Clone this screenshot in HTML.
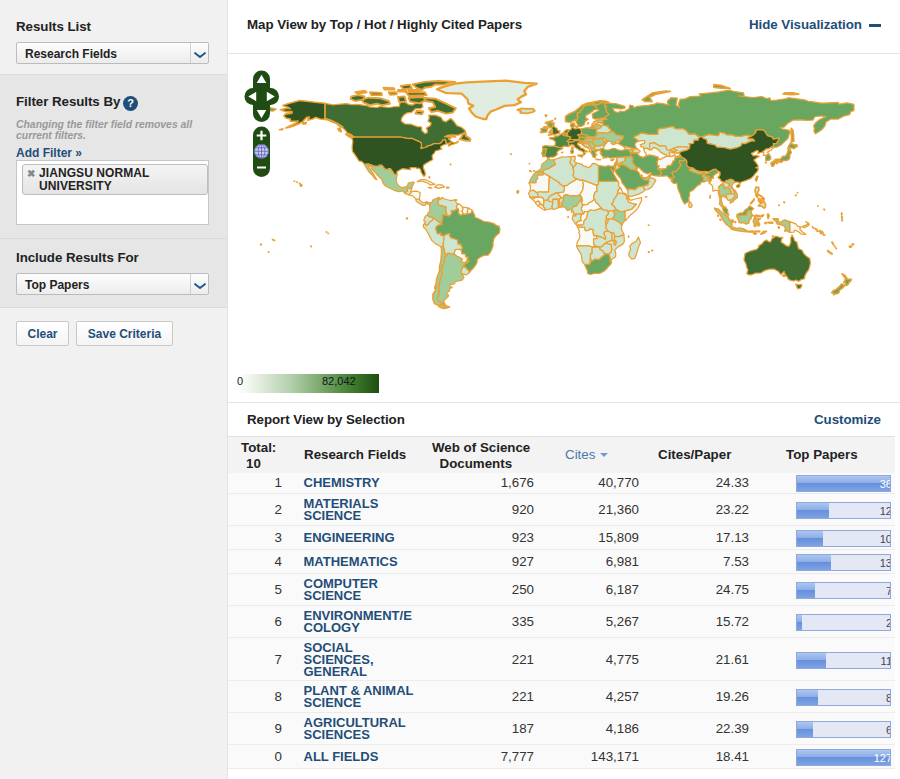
<!DOCTYPE html>
<html lang="en">
<head>
<meta charset="utf-8">
<title>Essential Science Indicators</title>
<style>
*{box-sizing:border-box;margin:0;padding:0}
html,body{width:900px;height:779px;overflow:hidden;background:#fff}
body{position:relative;font-family:"Liberation Sans",Arial,sans-serif;color:#222}
.abs{position:absolute}
#left{position:absolute;left:0;top:0;width:228px;height:779px;background:#f1f1f1;border-right:1px solid #e2e2e2}
#left .sec2{position:absolute;left:0;top:74px;width:227px;height:234px;background:#e6e6e6;border-top:1px solid #dedede;border-bottom:1px solid #dcdcdc}
#left .sep{position:absolute;left:0;top:238px;width:227px;height:1px;background:#d9d9d9}
.h{position:absolute;font-weight:bold;font-size:13.33px;color:#222;white-space:nowrap;letter-spacing:-0.05px}
.sel{position:absolute;left:16px;width:193px;height:22px;border:1px solid #bcbcbc;border-radius:2px;background:linear-gradient(#fdfdfd,#ececec);font-weight:bold;font-size:12px;color:#222;line-height:23.5px;padding-left:8px}
.sel .arr{position:absolute;right:0;top:0;width:18px;height:20px;border-left:1px solid #d0d0d0}
.sel .arr svg{position:absolute;left:2.5px;top:9px}
.btn{position:absolute;top:321px;height:25px;border:1px solid #c8c8c8;border-radius:2px;background:linear-gradient(#fff,#f4f4f4);font-weight:bold;font-size:12px;color:#1f4e79;text-align:center;line-height:25px}
#main{position:absolute;left:228px;top:0;width:672px;height:779px;background:#fff}
.line{position:absolute;left:0;width:672px;height:1px;background:#e4e4e4}
.th{position:absolute;font-weight:bold;font-size:13.33px;color:#222;line-height:15.5px;white-space:nowrap}
.row{position:absolute;left:0;width:667px;border-bottom:1px solid #ececec;background:#fafafa}
.num,.c1,.c2,.c3,.c4{position:absolute;font-size:13.33px;color:#333;white-space:nowrap;text-align:right}
.num{left:0;width:54px}
.c1{left:75.5px;text-align:left;font-weight:bold;color:#1f4e79;font-size:13px;line-height:12px;letter-spacing:0}
.c2{left:200px;width:106px}
.c3{left:320px;width:91px}
.c4{left:440px;width:81px}
.bar{position:absolute;left:568px;width:95px;height:17px;background:#e3e8f4;border:1px solid #8ea9da;overflow:hidden}
.bar i{position:absolute;left:0;top:0;height:15px;background:linear-gradient(#adc6ef 0%,#8eaee8 44%,#6690dc 48%,#7ea3e4 100%)}
.bar b{position:absolute;right:-2px;top:1px;font-weight:normal;font-size:11px;line-height:14px;color:#445}
.bar b.w{color:#fff}
</style>
</head>
<body>
<div id="left">
  <div class="sec2"></div>
  <div class="sep"></div>
  <div class="h" style="left:16px;top:18.5px">Results List</div>
  <div class="sel" style="top:42px">Research Fields<span class="arr"><svg width="12" height="7" viewBox="0 0 12 7"><path d="M1.2 1.2 L6 5 L10.8 1.2" fill="none" stroke="#235a90" stroke-width="2.1" stroke-linecap="round" stroke-linejoin="round"/></svg></span></div>
  <div class="h" style="left:16px;top:94px">Filter Results By</div>
  <div class="abs" style="left:123px;top:96px;width:15px;height:15px;border-radius:50%;background:#1f4e79;color:#fff;font-weight:bold;font-size:11px;line-height:15px;text-align:center">?</div>
  <div class="abs" style="left:16px;top:118.5px;width:200px;font-style:italic;font-weight:bold;font-size:10.4px;line-height:11.5px;color:#999">Changing the filter field removes all<br>current filters.</div>
  <div class="abs" style="left:16px;top:146px;font-weight:bold;font-size:12px;color:#1f4e79">Add Filter »</div>
  <div class="abs" style="left:16px;top:159.5px;width:193px;height:65.5px;background:#fff;border:1px solid #c6c6c6"></div>
  <div class="abs" style="left:22px;top:163.5px;width:186px;height:31.5px;background:linear-gradient(#f4f4f4,#e4e4e4);border:1px solid #bdbdbd;border-radius:3px"></div>
  <div class="abs" style="left:27px;top:167px;font-weight:bold;font-size:10px;color:#888;line-height:13px">✖</div>
  <div class="abs" style="left:39px;top:167px;font-weight:bold;font-size:12px;line-height:13px;color:#222;letter-spacing:0.08px">JIANGSU NORMAL<br>UNIVERSITY</div>
  <div class="h" style="left:16px;top:250px">Include Results For</div>
  <div class="sel" style="top:273px">Top Papers<span class="arr"><svg width="12" height="7" viewBox="0 0 12 7"><path d="M1.2 1.2 L6 5 L10.8 1.2" fill="none" stroke="#235a90" stroke-width="2.1" stroke-linecap="round" stroke-linejoin="round"/></svg></span></div>
  <div class="btn" style="left:16px;width:53px">Clear</div>
  <div class="btn" style="left:76px;width:97px">Save Criteria</div>
</div>
<div id="main">
  <div class="h" style="left:19px;top:17px">Map View by Top / Hot / Highly Cited Papers</div>
  <div class="h" style="left:521px;top:17px;color:#1f4e79">Hide Visualization</div>
  <div class="abs" style="left:641px;top:24px;width:12px;height:3px;background:#1f4e79"></div>
  <div class="line" style="top:53px"></div>
<svg class="abs" style="left:0;top:54px" width="672" height="320" viewBox="0 54 672 320">
<g stroke="#eba033" stroke-width="1.25" stroke-linejoin="round">
<path fill="#f7f9f4" d="M181.0,194.9 184.8,195.8 185.1,196.4 187.9,199.0 191.4,199.5 191.7,196.9 192.2,192.8 190.0,191.5 187.6,191.2 183.9,191.7 182.1,193.8Z"/>
<path fill="#f7f9f4" d="M189.2,181.5 193.3,179.5 197.5,179.7 202.4,182.0 207.0,184.3 201.6,184.8 200.8,183.5 195.8,181.6 192.5,181.0 190.9,181.5Z"/>
<path fill="#f7f9f4" d="M206.7,187.1 209.8,184.8 213.9,184.9 216.6,186.9 213.1,187.6 211.1,188.4Z"/>
<path fill="#f7f9f4" stroke-width="1.4" d="M200.3,187.4 203.6,187.9 202.4,188.2Z M218.6,187.2 221.0,187.4 220.5,188.0 218.6,187.9Z M200.8,177.2 201.6,176.4 201.3,178.0Z M227.5,199.7 228.8,199.9 227.9,200.8Z"/>
<path fill="#f7f9f4" d="M229.1,203.5 232.1,204.3 234.5,207.2 235.0,208.9 234.0,211.2 235.4,214.1 232.4,215.3 230.4,213.3 230.7,210.0 230.1,208.9 229.3,208.9 228.8,207.7 228.3,205.9 230.4,203.8Z"/>
<path fill="#f7f9f4" d="M234.5,207.2 238.7,207.7 240.3,208.1 239.5,210.0 239.5,213.8 237.0,214.3 235.4,214.1 234.0,211.2 235.0,208.9Z"/>
<path fill="#f7f9f4" d="M240.3,208.1 243.6,209.7 244.3,210.5 242.8,213.5 239.5,213.8 239.5,210.0Z"/>
<path fill="#f7f9f4" d="M226.0,253.8 226.6,251.0 227.5,249.5 232.1,249.1 233.4,250.4 233.9,253.6 237.3,254.0 237.8,256.8 239.8,256.9 239.3,259.4 239.2,260.9 237.3,262.3 236.2,262.5 232.7,262.0 234.4,259.2 231.2,257.3 228.8,256.3Z"/>
<path fill="#f7f9f4" d="M415.8,148.8 416.6,151.8 418.1,153.4 418.1,156.2 421.6,155.1 424.9,155.6 427.4,156.4 430.2,157.4 430.2,159.0 432.3,159.5 435.6,157.7 438.9,156.1 438.9,155.1 434.8,153.4 432.3,151.8 430.7,149.8 428.2,148.2 425.7,147.4 423.2,149.7 421.6,149.7 418.3,148.0Z"/>
<path fill="#f7f9f4" d="M441.0,156.4 442.0,154.8 441.0,153.1 443.5,150.5 445.5,151.5 443.8,152.6 447.6,152.8 450.9,152.6 452.9,156.1 450.4,156.2 447.1,157.2 447.1,155.2 445.0,155.7 443.5,156.6Z"/>
<path fill="#f7f9f4" d="M430.2,159.0 432.3,159.5 435.6,157.7 438.9,156.1 441.0,156.4 443.5,156.6 445.0,155.7 447.1,155.2 447.1,157.2 450.4,156.2 452.2,156.4 451.3,157.0 447.3,157.9 446.6,160.5 444.7,161.6 444.5,163.1 443.5,165.1 439.2,166.2 438.6,168.4 434.8,169.2 432.3,169.2 429.7,168.5 431.1,165.9 429.5,165.7 429.0,162.1Z"/>
<path fill="#f7f9f4" d="M481.4,183.5 481.9,181.5 483.2,180.3 483.1,178.0 485.4,178.0 485.2,176.1 486.2,174.8 489.2,173.0 489.7,171.2 492.0,172.1 492.0,175.1 490.1,177.5 492.3,179.4 493.1,181.0 495.9,182.0 494.3,184.1 492.5,185.1 490.5,187.1 491.6,189.8 491.1,192.8 492.8,196.7 493.4,198.4 492.0,201.0 491.6,197.7 490.3,192.8 490.1,190.3 487.5,190.3 485.0,191.2 484.7,187.1 483.7,184.8Z"/>
<path fill="#f7f9f4" d="M561.7,221.7 567.4,223.6 569.6,226.1 572.9,227.2 571.6,228.6 574.0,231.8 577.8,234.3 573.2,234.1 569.9,231.3 566.6,230.0 565.8,232.2 561.7,232.3Z M574.0,226.6 579.8,224.3 580.3,225.6 576.5,227.6Z M577.8,221.7 580.6,223.1 581.3,224.8 580.5,224.0Z M584.2,226.4 586.2,228.4 585.1,228.1Z"/>
<path fill="#f7f9f4" d="M534.3,152.0 538.4,148.8 540.6,148.7 543.4,146.9 544.5,147.4 544.7,148.0 543.0,150.3 539.4,152.1 540.9,154.1 538.1,155.4 535.3,155.4 535.8,152.6Z"/>
<path fill="#f7f9f4" d="M301.1,183.1 301.3,182.5 307.9,182.5 307.9,179.7 309.5,179.0 309.5,174.8 315.0,174.8 315.0,172.6 321.4,176.4 320.6,190.7 320.2,192.0 314.0,192.0 310.3,191.8 309.2,193.1 305.4,190.2 302.1,191.0 302.6,186.2Z"/>
<path fill="#f7f9f4" d="M301.8,197.1 306.7,196.9 306.7,198.2 304.6,199.5 302.9,198.2Z"/>
<path fill="#f7f9f4" d="M304.6,199.5 306.7,198.2 306.7,196.9 310.5,197.1 310.5,197.4 314.0,197.2 315.3,198.5 316.1,200.7 315.6,204.9 314.0,205.3 312.3,203.5 310.3,201.0 307.4,202.6 306.2,201.0Z"/>
<path fill="#f7f9f4" d="M307.4,202.6 310.3,201.0 312.3,203.5 310.3,206.1 307.9,203.8Z"/>
<path fill="#f7f9f4" d="M310.3,206.1 312.3,203.5 314.0,205.3 315.6,204.9 315.3,206.7 316.9,207.9 316.9,210.2 314.1,208.7Z"/>
<path fill="#f7f9f4" d="M331.3,207.4 330.5,206.7 330.1,203.5 330.1,201.0 329.1,199.2 330.9,199.4 331.8,202.6 332.1,207.2Z"/>
<path fill="#f7f9f4" d="M329.6,192.8 335.1,192.1 336.2,190.3 336.2,186.1 338.9,185.4 341.7,183.3 349.1,178.9 352.7,180.3 354.0,179.7 355.5,183.9 354.8,189.7 351.7,194.9 349.9,195.9 345.8,195.6 341.7,195.9 338.4,194.6 335.9,195.3 335.2,198.2 333.3,197.9 333.1,197.2 330.8,195.1Z"/>
<path fill="#f7f9f4" d="M354.0,179.7 368.9,185.4 368.9,191.7 367.0,192.0 365.6,196.6 366.4,199.4 363.9,201.5 360.6,203.1 360.0,204.3 356.5,204.8 354.8,205.1 352.7,201.0 354.5,201.0 353.4,196.4 351.7,194.9 354.8,189.7 355.5,183.9Z"/>
<path fill="#f7f9f4" d="M390.3,189.5 392.7,187.9 394.7,192.6 397.2,193.5 400.3,196.6 399.2,196.9 396.5,194.1 393.6,193.5 391.8,193.0 389.5,193.9 389.5,192.8Z"/>
<path fill="#f7f9f4" d="M400.3,196.6 399.2,196.9 398.2,198.5 399.8,199.5 400.7,198.5Z"/>
<path fill="#f7f9f4" d="M399.8,199.5 400.7,198.5 402.6,200.3 406.8,199.0 413.5,197.7 413.7,200.3 410.1,207.6 407.6,210.8 402.6,214.9 397.9,220.2 396.9,218.9 396.9,212.8 396.9,211.0 398.5,210.7 403.5,209.2 408.4,204.3 403.5,203.3 400.2,201.8Z"/>
<path fill="#f7f9f4" d="M354.8,205.1 356.5,204.8 360.0,204.3 360.6,203.1 363.9,201.5 366.4,199.4 367.0,199.5 368.0,202.6 369.7,203.5 372.1,206.7 374.5,209.0 371.3,208.9 366.4,210.5 362.3,210.0 360.0,211.7 356.7,211.7 355.7,213.8 353.2,209.2 353.7,206.9Z"/>
<path fill="#f7f9f4" d="M345.5,213.6 347.9,213.8 347.9,215.8 345.0,215.8Z"/>
<path fill="#f7f9f4" d="M347.4,223.8 348.6,223.1 349.9,221.2 353.2,220.7 352.4,218.2 353.2,215.1 351.1,213.8 355.7,213.8 356.7,211.7 360.0,211.7 358.6,218.2 356.0,221.0 355.7,224.0 353.2,225.4 350.7,224.9 349.1,225.6Z"/>
<path fill="#f7f9f4" d="M349.4,226.9 350.7,227.1 356.5,227.1 357.3,230.7 360.6,230.5 361.4,228.9 365.2,229.4 365.2,233.0 365.9,235.8 368.9,235.3 368.9,238.7 365.6,238.7 365.6,244.0 367.9,246.3 364.6,246.8 359.8,245.9 352.4,245.9 348.7,245.8 349.1,242.8 351.5,237.9 352.0,234.9 350.7,232.2 351.4,231.0Z"/>
<path fill="#f7f9f4" d="M374.1,265.9 376.6,264.5 377.8,265.8 375.8,267.6Z"/>
<path fill="#f7f9f4" stroke-width="1.5" d="M288.9,191.2 290.6,190.8 290.4,192.8 289.1,193.0Z M420.4,251.7 421.3,252.0 420.8,252.5Z M423.9,250.2 424.6,250.5 424.1,251.0Z M400.5,236.1 401.0,236.9 400.5,236.9Z M340.0,216.7 340.5,217.1 340.0,217.4Z M343.5,211.3 344.0,211.7 343.5,212.2Z M420.4,224.9 420.9,225.1 420.6,225.3Z"/>
<path fill="#f7f9f4" stroke-width="1.6" d="M599.6,250.5 604.4,253.8 603.7,254.1 599.9,251.5Z M621.5,246.1 623.6,246.4 622.6,247.4 621.5,246.9Z M624.0,244.1 625.8,244.0 624.8,245.0Z M603.9,242.0 604.8,242.5 604.2,243.1Z M604.8,243.6 605.8,244.5 605.2,244.6Z M606.5,246.1 607.2,246.6 606.5,246.6Z M608.1,248.1 608.5,248.6 608.0,248.6Z M587.2,228.4 588.9,229.4 588.0,229.5Z M588.9,230.5 590.0,231.3 589.2,231.3Z M592.2,232.7 594.3,233.3 593.0,233.6Z M594.1,231.2 595.1,232.8 594.5,232.3Z M595.1,234.3 596.8,234.9 595.8,235.1Z M591.3,230.5 592.7,231.2 591.8,231.2Z M567.6,195.3 568.1,195.1 567.8,195.8Z M555.9,202.1 556.6,202.1 556.2,202.8Z M595.9,209.2 596.6,209.2 596.3,209.9Z M613.4,213.1 614.1,213.5 613.7,214.8Z M613.7,216.4 614.4,217.1 613.9,218.4Z M614.1,219.4 614.6,220.0 614.1,221.0Z M551.0,204.9 551.3,205.1 551.0,205.4Z M589.8,205.9 590.2,206.1 590.0,206.2Z M569.4,192.5 569.6,192.6 569.4,192.8Z M44.5,239.5 45.5,239.7 45.0,240.0Z M46.0,240.2 46.7,240.4 46.2,240.5Z M82.8,246.1 83.4,246.3 83.3,246.8Z M98.3,231.8 98.6,232.0 98.3,232.2Z M100.1,233.3 100.4,233.5 100.1,233.6Z M40.4,252.0 40.9,252.2 40.6,252.3Z M32.8,244.0 33.3,244.6 32.7,245.0Z M222.3,164.3 222.8,164.3 222.5,164.6Z"/>
<path fill="#e2ede1" stroke-width="2.3" d="M209.0,89.2 217.2,92.8 220.5,93.1 233.7,93.6 239.5,99.3 240.3,103.4 245.3,105.9 241.1,108.3 243.6,112.4 247.7,116.5 255.1,119.0 258.4,119.0 259.3,115.7 262.6,111.6 267.5,109.7 276.6,105.9 286.5,105.1 293.0,102.3 289.7,99.3 293.0,96.9 298.0,94.4 296.3,91.1 299.6,87.0 308.7,83.7 296.3,82.9 278.2,80.6 260.1,81.3 238.7,82.4 227.1,83.7 220.5,85.4 212.3,87.8Z"/>
<path fill="#cee5cf" d="M177.4,193.6 181.0,194.9 182.1,193.8 183.9,191.7 182.8,191.3 183.8,188.7 183.8,187.1 182.3,188.2 179.3,188.2 179.3,191.2 177.7,192.0Z"/>
<path fill="#cee5cf" d="M187.9,199.0 188.1,201.0 191.5,203.5 192.7,204.1 195.0,205.4 197.0,205.4 198.3,202.8 200.4,204.6 201.9,204.4 201.7,203.1 198.3,201.7 195.5,203.0 193.3,201.8 191.4,199.5Z"/>
<path fill="#cee5cf" d="M211.8,198.0 211.1,199.9 213.9,198.5 213.9,197.4 216.4,199.0 220.5,200.0 223.0,200.7 226.3,199.9 227.3,201.0 229.1,203.5 230.4,203.8 228.3,205.9 228.8,207.7 229.3,208.9 226.3,210.8 223.3,210.7 223.8,213.3 221.4,216.1 218.9,215.4 218.6,213.6 217.6,210.0 218.1,207.2 213.9,205.9 210.6,205.1 210.0,202.6 209.8,200.2Z"/>
<path fill="#cee5cf" d="M199.4,215.1 201.6,216.7 203.2,216.9 205.2,217.6 204.9,219.9 201.6,222.3 199.9,224.8 198.3,225.6 197.0,224.6 197.0,223.0 197.8,221.5 195.8,221.0 196.1,219.0 197.5,216.1Z M178.5,217.9 179.7,217.9 179.3,219.0 178.5,218.9Z"/>
<path fill="#cee5cf" d="M197.0,223.0 197.0,224.6 198.3,225.6 199.9,224.8 201.6,222.3 204.9,219.9 205.2,217.6 207.3,219.0 209.8,221.3 212.8,223.6 214.1,224.3 209.3,225.6 207.7,228.1 209.0,232.7 210.1,233.8 213.0,233.0 213.0,235.4 214.8,235.4 216.1,237.9 215.6,242.0 214.8,243.6 215.6,244.5 214.8,246.1 213.3,247.4 211.5,245.8 207.3,243.6 203.7,240.4 202.1,237.1 199.4,232.2 197.8,229.2 195.5,227.2 195.3,224.8Z"/>
<path fill="#cee5cf" d="M214.8,235.4 216.1,237.9 215.6,242.0 214.8,243.6 215.6,244.5 214.8,246.1 215.9,248.6 216.4,251.0 217.4,254.8 218.9,254.8 220.0,253.2 223.0,253.8 226.0,253.8 226.6,251.0 227.5,249.5 232.1,249.1 233.4,250.4 234.0,248.6 234.5,246.9 233.1,245.8 233.1,244.1 230.1,244.0 229.6,240.0 227.1,239.0 223.0,237.6 221.7,236.3 221.7,233.5 219.7,233.6 216.4,235.4Z"/>
<path fill="#cee5cf" d="M234.4,266.9 237.0,266.8 241.1,271.0 241.3,272.7 238.8,274.6 236.7,274.6 233.1,273.2 233.4,270.7Z"/>
<path fill="#cee5cf" stroke-width="1.8" d="M317.3,115.2 318.6,115.2 318.1,116.4Z M289.3,109.8 293.0,108.5 299.6,108.8 305.2,108.7 306.9,110.8 304.6,112.1 298.8,113.4 292.2,112.8 293.0,111.1Z"/>
<path fill="#cee5cf" d="M355.7,143.3 360.6,143.8 361.3,144.7 361.4,146.1 359.8,147.5 358.1,146.9 355.3,144.9Z"/>
<path fill="#cee5cf" d="M359.8,147.9 359.8,147.5 361.4,146.1 362.8,147.2 363.2,148.7 363.9,150.5 362.6,152.3 361.3,151.3 361.4,148.8Z"/>
<path fill="#cee5cf" d="M363.2,148.7 364.7,148.2 366.2,148.0 367.2,149.7 363.9,150.5Z"/>
<path fill="#cee5cf" d="M366.7,144.4 367.0,145.6 371.2,145.9 373.8,145.1 376.4,145.7 375.4,148.5 372.8,149.0 372.1,149.7 369.7,149.5 367.2,149.7 366.2,148.0 367.0,146.6Z"/>
<path fill="#cee5cf" d="M364.1,125.4 363.9,123.9 365.1,122.9 366.5,122.8 368.0,123.9 369.3,123.6 369.3,122.4 371.3,122.3 374.5,123.1 375.8,125.2 373.1,126.1 370.3,124.9Z"/>
<path fill="#cee5cf" d="M368.0,129.0 371.7,128.3 373.0,127.0 373.1,126.1 375.8,125.2 380.2,126.2 380.4,127.7 383.2,129.8 381.7,132.0 379.7,133.3 374.6,132.9 368.2,132.9 368.7,131.0Z"/>
<path fill="#cee5cf" d="M373.1,138.2 375.1,138.0 377.4,138.8 378.7,141.1 376.9,141.5 375.8,142.8 375.6,140.6Z"/>
<path fill="#cee5cf" d="M395.2,146.2 397.7,149.3 401.0,150.0 403.5,149.7 405.9,150.0 405.8,148.7 401.8,147.5 398.5,146.6Z"/>
<path fill="#cee5cf" d="M401.0,150.0 401.3,151.6 403.1,152.3 405.1,153.6 405.9,152.6 404.3,150.5 403.5,149.7Z"/>
<path fill="#cee5cf" d="M403.5,149.7 404.3,150.5 405.9,152.6 405.1,153.6 405.9,153.6 408.4,152.5 409.9,154.4 410.1,153.4 412.2,151.3 409.4,148.8 405.8,148.7 405.9,150.0Z"/>
<path fill="#cee5cf" d="M410.4,141.3 413.3,140.6 416.6,140.6 416.6,143.1 413.3,144.4 412.2,144.7 413.3,146.9 415.8,147.2 415.8,148.8 418.3,148.0 421.6,149.7 421.6,143.6 425.7,142.6 429.8,144.7 431.5,146.1 436.3,145.7 438.2,146.9 438.1,148.5 438.9,149.8 441.4,150.2 443.0,149.5 445.5,148.4 446.3,148.0 450.4,146.9 452.4,146.6 454.2,147.0 459.5,147.2 461.5,148.2 461.6,146.9 461.8,144.1 461.0,143.8 465.3,143.3 466.1,140.0 470.2,140.2 470.5,138.0 472.7,136.7 469.7,136.1 466.9,133.8 461.1,134.1 457.7,130.0 454.5,128.5 450.4,128.8 446.3,128.5 446.3,126.7 443.0,126.7 437.2,127.9 430.7,128.8 429.8,130.5 429.8,134.1 427.4,134.4 420.8,134.4 419.1,133.8 413.3,132.8 409.2,135.4 406.8,136.2 405.9,137.9 408.4,139.2Z"/>
<path fill="#cee5cf" d="M421.6,149.7 421.6,143.6 425.7,142.6 429.8,144.7 431.5,146.1 436.3,145.7 438.2,146.9 438.1,148.5 438.9,149.8 441.4,150.2 443.0,149.5 445.5,148.4 447.1,149.7 449.6,150.5 446.3,151.5 443.5,150.5 441.0,153.1 442.0,154.8 441.0,156.4 438.9,156.1 438.9,155.1 434.8,153.4 432.3,151.8 430.7,149.8 428.2,148.2 425.7,147.4 423.2,149.7Z"/>
<path fill="#cee5cf" d="M445.5,148.4 446.3,148.0 450.4,146.9 452.4,146.6 454.2,147.0 459.5,147.2 461.5,148.2 458.7,150.2 454.5,151.1 450.9,152.6 447.6,152.8 443.8,152.6 445.5,151.5 446.3,151.5 449.6,150.5 447.1,149.7Z"/>
<path fill="#cee5cf" d="M389.0,158.5 389.8,157.0 391.9,157.0 395.2,157.0 399.2,156.6 397.4,157.5 396.9,161.0 393.2,162.6 389.9,164.4 388.1,163.8 388.5,162.8 389.6,161.3 388.6,160.7 388.3,160.0Z"/>
<path fill="#cee5cf" d="M387.0,169.0 387.8,165.7 388.1,163.8 389.9,164.4 393.2,162.6 393.9,164.6 390.3,165.7 391.9,167.4 388.8,169.5Z"/>
<path fill="#cee5cf" d="M405.9,169.7 408.2,168.2 409.1,170.7 407.6,170.3Z"/>
<path fill="#cee5cf" d="M399.8,190.5 400.5,188.9 402.6,188.9 406.8,189.7 410.1,186.9 415.0,186.2 416.8,190.0 415.3,191.8 410.1,194.4 404.3,196.1 401.0,196.6 400.5,195.6 399.8,192.8Z M417.3,196.7 419.1,196.9 418.0,197.2Z"/>
<path fill="#cee5cf" d="M415.0,186.2 419.9,184.6 421.1,181.3 420.3,180.2 421.3,177.7 422.2,176.6 423.2,178.2 425.9,178.7 427.9,180.5 425.7,183.9 424.4,186.2 422.4,187.9 419.9,189.5 416.8,190.0Z M421.8,174.6 422.4,174.3 422.2,175.4Z"/>
<path fill="#cee5cf" d="M413.0,176.7 413.7,174.6 414.3,175.9 414.0,177.2Z"/>
<path fill="#cee5cf" d="M475.8,172.6 476.8,171.3 480.3,171.8 480.9,173.3 477.3,173.6Z"/>
<path fill="#cee5cf" d="M460.8,204.3 461.5,201.3 463.1,203.3 464.3,205.6 463.3,207.2 461.5,207.6 460.8,205.9Z"/>
<path fill="#cee5cf" d="M494.3,184.1 495.9,182.0 497.1,182.6 497.7,180.7 499.0,183.0 501.5,183.9 500.7,185.6 502.8,186.7 505.1,189.7 506.6,192.6 506.5,193.3 504.0,193.8 502.7,193.9 503.3,191.7 501.8,190.3 501.8,188.7 499.5,187.2 497.4,187.9 495.9,188.7 496.2,185.4 494.9,185.4Z"/>
<path fill="#cee5cf" d="M498.9,198.2 498.1,195.3 499.2,193.9 502.7,193.9 504.0,193.8 506.5,193.3 506.5,197.2 504.0,199.2 501.5,200.3 500.0,200.2 499.2,199.2Z"/>
<path fill="#cee5cf" d="M517.2,210.0 519.1,209.2 519.0,210.3 518.0,210.7Z"/>
<path fill="#cee5cf" stroke-width="1.6" d="M528.0,187.1 530.7,187.2 530.9,190.3 529.7,192.0 529.7,194.1 533.7,196.1 533.7,196.9 531.2,195.3 528.0,194.8 527.6,193.1 526.9,190.8Z M530.4,205.9 532.8,203.3 536.0,201.3 537.6,204.3 537.3,207.1 536.0,208.2 533.7,206.2Z M534.1,196.9 536.3,198.5 535.6,200.7 534.6,199.7Z M530.4,198.0 532.3,200.2 532.0,202.5 531.0,201.7 530.4,200.2Z M522.4,203.6 526.2,198.9 525.9,200.5 523.1,203.6Z M527.9,195.4 529.5,195.8 529.0,197.2Z M532.5,199.0 533.7,199.0 533.0,201.8Z"/>
<path fill="#cee5cf" d="M474.0,136.7 476.0,136.2 480.9,134.3 490.0,135.7 490.8,134.6 491.6,132.1 497.4,133.3 498.2,134.7 504.8,134.9 507.3,136.2 512.2,136.5 518.0,135.1 521.6,135.7 523.4,136.2 520.5,137.4 519.8,138.8 524.6,138.8 526.7,140.8 522.8,141.1 517.2,143.6 513.7,143.4 513.1,145.7 508.9,147.7 502.3,149.2 495.7,147.5 489.2,147.2 486.7,144.9 479.3,143.3 478.6,139.5 475.3,138.4Z"/>
<path fill="#cee5cf" d="M325.7,159.8 326.5,162.5 327.3,164.4 323.2,166.9 320.2,168.7 315.0,170.3 315.0,172.6 321.4,176.4 331.3,182.8 331.3,183.5 334.6,185.9 338.9,185.4 341.7,183.3 349.1,178.9 345.8,177.2 345.0,174.3 345.8,173.1 345.5,169.8 345.0,167.9 344.1,164.9 343.0,164.1 341.7,162.0 343.0,160.0 343.5,156.9 340.8,156.7 337.5,157.0 334.2,156.9 329.3,158.5Z"/>
<path fill="#cee5cf" d="M343.5,156.9 343.0,160.0 341.7,162.0 343.0,164.1 344.1,164.9 345.0,167.9 346.1,166.6 348.3,164.1 348.3,163.0 345.9,161.1 347.3,159.5 346.6,157.5 347.4,156.7 345.5,156.2Z"/>
<path fill="#cee5cf" d="M348.3,163.0 348.3,164.1 346.1,166.6 345.0,167.9 345.5,169.8 345.8,173.1 345.0,174.3 345.8,177.2 349.1,178.9 352.7,180.3 354.0,179.7 368.9,185.4 368.9,184.6 370.5,184.6 370.5,181.3 370.5,165.6 367.2,163.6 364.7,163.4 362.3,166.6 360.6,167.7 358.1,166.6 354.8,165.6 354.3,164.3 350.7,163.4Z"/>
<path fill="#cee5cf" d="M321.4,176.4 331.3,182.8 331.3,183.5 334.6,185.9 336.2,186.1 336.2,190.3 335.1,192.1 329.6,192.8 328.5,192.6 326.0,194.1 324.4,194.9 322.2,195.8 320.6,198.0 320.2,200.3 319.1,200.0 316.1,200.7 315.3,198.5 314.0,197.2 310.5,197.4 310.5,197.1 309.2,193.1 310.3,191.8 314.0,192.0 320.2,192.0 320.6,190.7Z"/>
<path fill="#cee5cf" d="M302.1,191.0 305.4,190.2 309.2,193.1 310.5,197.1 306.7,196.9 301.8,197.1 301.6,195.8 300.5,193.3Z"/>
<path fill="#cee5cf" d="M316.1,200.7 319.1,200.0 320.2,200.3 321.6,201.5 324.9,201.8 324.7,204.3 324.0,206.7 324.7,209.0 322.7,208.9 319.4,209.5 316.9,210.2 316.9,207.9 315.3,206.7 315.6,204.9Z"/>
<path fill="#cee5cf" d="M320.2,200.3 320.6,198.0 322.2,195.8 324.4,194.9 326.0,194.1 328.5,192.6 329.6,192.8 330.8,195.1 333.1,197.2 333.3,197.9 330.9,199.4 329.1,199.2 324.7,199.4 324.9,201.8 321.6,201.5Z"/>
<path fill="#cee5cf" d="M324.7,209.0 324.0,206.7 324.7,204.3 324.9,201.8 324.7,199.4 329.1,199.2 330.1,201.0 330.1,203.5 330.5,206.7 331.3,207.4 329.3,208.2 326.0,209.5Z"/>
<path fill="#cee5cf" d="M332.1,207.2 331.8,202.6 330.9,199.4 333.3,197.9 335.2,198.2 335.6,200.2 333.9,202.6 333.7,206.9Z"/>
<path fill="#cee5cf" d="M370.5,181.3 390.1,181.3 390.8,183.0 390.6,186.2 392.7,187.9 390.3,189.5 389.5,192.8 389.0,195.3 387.0,198.0 385.8,200.0 385.3,201.8 383.7,204.3 386.2,206.4 388.5,209.9 385.3,210.5 380.4,211.3 378.7,210.3 375.4,210.2 374.5,209.0 372.1,206.7 369.7,203.5 368.0,202.6 367.0,199.5 366.4,199.4 365.6,196.6 367.0,192.0 368.9,191.7 368.9,184.6 370.5,184.6Z"/>
<path fill="#cee5cf" d="M389.5,193.9 391.8,193.0 393.6,193.5 396.5,194.1 399.2,196.9 398.2,198.5 399.8,199.5 400.2,201.8 403.5,203.3 408.4,204.3 403.5,209.2 398.5,210.7 396.9,211.0 394.4,211.8 391.9,211.5 389.5,210.2 388.5,209.9 386.2,206.4 383.7,204.3 385.3,201.8 385.8,200.0 387.0,198.0 389.0,195.3Z"/>
<path fill="#cee5cf" d="M380.4,211.3 385.3,210.5 387.0,214.9 385.3,217.1 385.3,219.0 379.6,219.2 378.1,219.7 378.2,216.1 380.4,213.8 380.1,211.7Z"/>
<path fill="#cee5cf" d="M379.6,219.2 385.3,219.0 391.3,222.3 393.9,225.1 393.2,228.1 394.4,231.3 395.9,234.6 391.1,236.6 386.8,236.3 385.8,233.1 383.5,232.8 380.4,231.5 377.9,228.1 377.9,224.8 380.1,221.3Z"/>
<path fill="#cee5cf" d="M378.1,219.7 379.6,219.2 380.1,221.3 377.9,224.8 377.4,221.8Z"/>
<path fill="#cee5cf" d="M343.5,209.5 345.8,206.1 347.9,206.4 349.1,204.6 351.1,201.7 353.4,198.5 352.7,197.1 353.4,196.4 354.5,201.0 352.7,201.0 354.8,205.1 353.7,206.9 353.2,209.2 355.7,213.8 351.1,213.8 347.9,213.8 345.5,213.6 345.3,211.2 344.0,210.0Z"/>
<path fill="#cee5cf" d="M345.0,215.8 347.9,215.8 347.9,213.8 351.1,213.8 353.2,215.1 352.4,218.2 353.2,220.7 349.9,221.2 348.6,223.1 347.4,223.8 344.1,219.0Z"/>
<path fill="#cee5cf" d="M349.4,226.9 349.1,225.6 350.7,224.9 353.2,225.4 355.7,224.0 356.0,221.0 358.6,218.2 360.0,211.7 362.3,210.0 366.4,210.5 371.3,208.9 374.5,209.0 375.4,210.2 378.7,210.3 380.1,211.7 380.4,213.8 378.2,216.1 378.1,219.7 377.4,221.8 377.9,224.8 377.9,228.1 380.4,231.5 376.9,231.3 376.1,232.7 376.6,235.4 377.9,237.7 377.1,239.4 374.6,237.6 371.3,236.6 369.3,235.9 368.9,235.3 365.9,235.8 365.2,233.0 365.2,229.4 361.4,228.9 360.6,230.5 357.3,230.7 356.5,227.1 350.7,227.1Z"/>
<path fill="#cee5cf" d="M365.6,238.7 368.9,238.7 368.9,235.3 369.3,235.9 371.3,236.6 374.6,237.6 377.1,239.4 377.9,237.7 376.6,235.4 376.1,232.7 376.9,231.3 380.4,231.5 383.5,232.8 384.2,237.1 383.7,240.4 379.1,242.0 376.9,243.5 373.8,246.8 371.0,246.6 367.9,246.3 365.6,244.0Z"/>
<path fill="#cee5cf" d="M383.5,232.8 385.8,233.1 386.8,236.3 386.3,239.5 388.5,241.8 387.5,245.4 385.8,243.6 386.2,241.2 383.7,240.4 384.2,237.1Z"/>
<path fill="#cee5cf" d="M395.9,234.6 391.1,236.6 386.8,236.3 386.3,239.5 388.5,241.8 387.5,245.4 385.8,243.6 386.2,241.2 383.7,240.4 379.1,242.0 379.4,243.6 383.5,244.8 383.4,246.9 383.7,249.9 382.7,252.3 380.9,254.1 382.0,257.6 382.0,261.4 383.5,261.5 383.0,259.9 387.6,256.8 387.8,253.5 386.7,250.2 389.9,246.9 394.9,244.1 396.4,241.2Z"/>
<path fill="#cee5cf" d="M371.0,246.6 373.8,246.8 376.9,243.5 379.4,243.6 383.5,244.8 383.4,246.9 383.7,249.9 382.7,252.3 380.9,254.1 377.8,253.8 375.4,252.8 374.9,251.0 372.1,249.4Z"/>
<path fill="#cee5cf" d="M362.3,253.5 362.3,258.1 363.6,261.4 366.7,259.2 371.3,259.5 373.6,257.3 377.8,253.8 375.4,252.8 374.9,251.0 372.1,249.4 371.0,246.6 367.9,246.9 363.9,247.4 363.9,253.5Z"/>
<path fill="#cee5cf" d="M348.7,245.8 352.4,245.9 359.8,245.9 364.6,246.8 367.9,246.3 371.0,246.6 367.9,246.9 363.9,247.4 363.9,253.5 362.3,253.5 362.3,258.1 362.3,264.0 358.1,264.6 356.5,264.3 354.3,261.7 353.2,254.3 349.1,247.7Z"/>
<path fill="#cee5cf" d="M380.4,260.0 382.0,260.0 382.0,262.0 380.4,262.0Z"/>
<path fill="#cee5cf" d="M410.5,237.1 412.5,242.8 410.9,246.1 408.1,255.1 406.8,258.4 403.8,259.2 401.0,255.9 401.0,252.7 402.6,249.9 401.8,246.1 404.0,243.6 408.1,241.2Z"/>
<path fill="#a1cd9a" d="M136.3,164.1 138.1,167.4 140.6,171.5 143.9,174.8 147.2,178.9 148.8,179.7 147.2,177.2 145.5,173.9 143.1,170.7 140.3,165.7 143.1,166.2 143.9,169.0 147.2,172.3 149.7,175.6 153.8,179.2 155.4,183.8 157.9,186.2 162.0,188.2 167.0,190.7 171.1,191.7 174.4,190.8 177.4,193.6 177.7,192.0 179.3,191.2 179.3,188.2 182.3,188.2 183.8,187.1 185.1,184.6 186.3,182.3 184.3,182.0 180.3,183.0 179.7,185.4 177.7,186.9 173.6,187.6 171.1,186.2 168.9,183.0 168.1,180.5 168.6,177.2 169.1,174.9 166.1,174.1 165.3,172.3 162.2,168.5 160.4,168.5 159.2,169.8 157.1,168.9 153.8,165.2 151.0,165.2 151.0,166.1 146.4,166.1 140.3,163.8Z"/>
<path fill="#a1cd9a" d="M201.7,203.1 204.1,202.1 204.9,200.0 207.0,199.0 210.6,197.4 211.8,198.0 209.8,200.2 210.0,202.6 210.6,205.1 213.9,205.9 218.1,207.2 217.6,210.0 218.6,213.6 218.9,215.4 214.3,214.6 214.8,218.2 213.9,220.7 214.1,224.3 212.8,223.6 209.8,221.3 207.3,219.0 205.2,217.6 203.2,216.9 201.6,216.7 199.4,215.1 199.9,213.3 201.9,210.8 201.6,206.7 201.9,204.4Z"/>
<path fill="#a1cd9a" stroke-width="1.5" d="M213.3,247.4 214.8,246.1 215.9,248.6 216.4,251.0 217.4,254.8 218.9,255.1 216.6,257.6 216.4,261.7 214.3,266.6 213.4,270.7 214.3,273.5 213.1,276.9 212.0,281.0 211.0,285.5 211.1,289.6 211.5,293.7 209.3,298.6 210.1,301.0 214.8,303.0 216.6,303.3 213.1,304.3 212.3,305.6 209.8,305.1 206.5,303.5 204.9,299.4 204.9,294.5 207.3,290.4 207.7,286.3 208.2,282.2 208.7,278.4 209.8,275.6 211.5,270.7 211.5,266.6 212.5,262.5 213.1,258.4 213.6,251.8Z M216.2,303.8 216.2,307.4 218.9,308.1 214.8,308.4 210.6,306.5 213.1,305.3 213.9,304.2Z M207.0,286.0 208.2,286.1 208.0,288.6 206.7,288.2Z"/>
<path fill="#a1cd9a" d="M220.0,253.2 223.0,253.8 226.0,253.8 228.8,256.3 231.2,257.3 234.4,259.2 232.7,262.0 236.2,262.5 237.3,262.3 239.2,260.9 239.3,259.4 240.8,260.4 240.6,262.0 237.3,263.8 234.4,266.9 233.4,270.7 233.1,273.2 235.0,275.6 235.9,277.3 234.4,279.9 231.2,281.0 227.1,281.4 226.6,284.0 222.2,284.6 222.2,287.1 224.3,287.1 221.7,288.7 221.4,291.2 218.1,292.8 220.5,295.3 220.5,296.1 217.6,299.1 215.6,300.7 216.6,303.3 214.8,303.0 210.1,301.0 209.3,298.6 211.5,293.7 211.1,289.6 211.0,285.5 212.0,281.0 213.1,276.9 214.3,273.5 213.4,270.7 214.3,266.6 216.4,261.7 216.6,257.6 218.9,255.1 218.9,254.8Z M216.2,303.8 216.2,307.4 219.7,307.6 221.9,307.1 218.1,305.6Z"/>
<path fill="#a1cd9a" d="M324.5,129.8 321.9,130.0 321.9,130.8 322.7,131.6 320.7,132.4 323.5,133.1 324.9,132.8 324.4,132.1 324.4,130.5Z"/>
<path fill="#a1cd9a" d="M319.1,128.7 320.2,128.2 319.4,126.9 317.3,126.7 317.1,127.2 316.0,128.0 316.9,128.7Z"/>
<path fill="#a1cd9a" d="M357.3,137.4 360.3,136.2 360.6,136.4 366.4,136.9 365.7,138.0 362.3,138.4 360.1,139.0 357.5,138.7Z"/>
<path fill="#a1cd9a" d="M356.3,140.3 357.5,138.7 360.1,139.0 362.3,138.4 365.7,138.0 366.9,138.8 364.2,141.6 362.8,141.8 360.3,142.1 356.7,141.1 355.7,140.8Z"/>
<path fill="#a1cd9a" d="M351.7,142.8 355.0,142.8 356.7,141.1 360.3,142.1 360.6,143.8 355.7,143.3 355.3,144.9 358.1,146.9 359.8,147.9 357.3,146.9 354.3,144.9 353.2,143.3 351.7,143.4Z"/>
<path fill="#a1cd9a" d="M360.3,142.1 362.8,141.8 364.7,143.3 366.7,144.4 367.0,146.6 366.2,148.0 364.7,148.2 363.2,148.7 362.8,147.2 361.4,146.1 361.3,144.7 360.6,143.8Z"/>
<path fill="#a1cd9a" d="M364.2,141.6 366.9,138.8 369.7,138.8 373.1,138.2 375.6,140.6 375.8,142.8 378.2,143.3 376.4,145.7 373.8,145.1 371.2,145.9 367.0,145.6 366.7,144.4 364.7,143.3 362.8,141.8Z"/>
<path fill="#a1cd9a" d="M382.5,160.0 386.3,158.9 385.3,160.2 383.7,160.7Z"/>
<path fill="#a1cd9a" d="M363.9,126.7 364.1,125.4 370.3,124.9 373.1,126.1 373.0,127.0 371.7,128.3 368.0,129.0 366.9,128.3 366.9,127.4Z"/>
<path fill="#a1cd9a" d="M369.3,122.4 368.0,121.1 368.0,120.3 371.3,119.7 375.4,119.8 374.5,121.0 374.9,122.4 374.5,123.1 371.3,122.3Z M365.6,121.5 367.2,121.3 366.4,122.1Z"/>
<path fill="#a1cd9a" d="M366.7,136.9 368.9,134.3 368.2,132.9 374.6,132.9 379.7,133.3 381.7,132.0 385.0,131.5 386.0,132.4 388.0,134.7 391.9,135.6 395.4,136.1 394.9,138.8 392.3,140.2 389.5,140.8 387.0,141.6 387.8,143.1 389.6,142.9 387.8,143.6 385.3,144.6 384.3,144.3 382.9,142.9 384.7,141.8 381.7,141.5 380.1,141.1 378.2,143.3 375.8,142.8 376.9,141.5 378.7,141.1 377.4,138.8 375.1,138.0 373.1,138.2 369.7,138.8 366.9,138.8 365.7,138.0 366.4,136.9Z"/>
<path fill="#a1cd9a" d="M387.1,163.1 388.6,160.7 389.6,161.3 388.5,162.8Z"/>
<path fill="#a1cd9a" d="M399.2,156.6 403.1,156.4 405.1,158.7 404.3,161.6 405.4,163.3 407.9,166.7 409.2,168.4 408.2,168.2 405.9,169.7 403.0,169.5 398.5,166.4 395.9,165.1 393.9,164.6 393.2,162.6 396.9,161.0 397.4,157.5Z"/>
<path fill="#a1cd9a" d="M414.3,177.7 416.0,179.8 420.3,180.2 421.3,177.7 422.2,176.6 421.9,174.8 419.1,177.5 416.6,177.7Z"/>
<path fill="#a1cd9a" d="M461.3,170.2 462.8,167.9 464.6,167.7 467.7,170.0 470.7,171.2 474.5,171.6 474.5,174.1 470.2,173.8 466.6,172.5 464.1,171.6Z"/>
<path fill="#a1cd9a" d="M476.0,182.0 476.1,181.2 475.5,179.4 475.6,177.5 474.5,177.2 474.5,175.1 475.0,174.1 477.3,174.8 477.3,175.9 481.6,176.4 480.3,177.5 479.6,178.5 481.4,178.5 481.9,181.5 481.4,183.5 480.6,180.8 478.6,181.0Z"/>
<path fill="#a1cd9a" d="M494.3,184.1 492.5,185.1 490.5,187.1 491.6,189.8 491.1,192.8 492.8,196.7 493.4,198.4 492.0,201.0 491.3,203.8 493.6,206.7 494.3,206.7 495.9,208.1 497.6,207.2 495.7,206.1 494.8,205.4 493.9,202.1 492.8,199.5 494.1,196.4 494.1,195.4 495.6,195.4 495.7,196.7 497.9,197.4 498.9,198.2 498.1,195.3 499.2,193.9 502.7,193.9 503.3,191.7 501.8,190.3 501.8,188.7 499.5,187.2 497.4,187.9 495.9,188.7 496.2,185.4 494.9,185.4Z"/>
<path fill="#a1cd9a" d="M497.7,180.7 499.9,180.2 502.8,179.2 505.1,180.0 507.3,182.1 505.1,183.5 503.7,186.2 505.0,188.7 507.8,191.2 509.3,194.6 509.3,197.7 506.0,200.3 505.1,201.8 502.3,203.3 502.2,200.8 501.5,200.3 504.0,199.2 506.5,197.2 506.5,193.3 506.6,192.6 505.1,189.7 502.8,186.7 500.7,185.6 501.5,183.9 499.0,183.0Z"/>
<path fill="#a1cd9a" stroke-width="1.5" d="M486.4,208.2 490.0,208.9 494.8,213.5 500.0,216.6 501.5,220.4 504.0,222.3 503.8,226.9 501.5,226.9 497.9,224.0 494.9,219.9 492.1,214.6 488.3,211.3Z M502.7,228.6 504.8,227.2 508.3,228.4 512.1,227.9 515.0,228.7 518.0,230.2 517.8,231.7 512.2,231.0 507.3,230.2 504.6,229.5Z M509.9,214.1 511.4,215.9 514.2,215.1 518.5,214.9 518.8,212.8 520.1,210.3 522.9,210.5 523.6,214.1 525.4,215.8 523.4,216.1 522.9,218.7 521.3,219.9 520.8,223.1 518.2,224.1 515.5,222.6 513.4,223.1 510.9,222.2 510.6,219.5 508.9,216.9 508.9,214.9Z M526.7,216.1 527.1,215.3 528.7,215.3 532.8,215.9 535.6,214.8 534.5,216.7 529.5,216.6 527.4,217.4 527.4,218.9 529.7,218.9 532.5,218.7 529.7,220.5 531.8,224.3 530.7,226.1 529.5,225.1 528.5,222.0 527.7,226.4 526.2,226.4 526.2,223.1 525.1,221.8 526.7,217.1Z M518.8,230.8 520.0,231.8 519.1,231.8Z M520.5,231.0 521.6,231.2 521.3,232.0 520.5,231.8Z M521.8,231.2 525.4,231.0 525.4,231.8 522.1,232.2Z M526.9,231.2 531.8,231.0 531.7,231.8 526.9,231.8Z M532.8,234.3 535.3,231.5 538.6,231.2 536.1,233.1Z M525.7,232.8 528.4,233.8 527.1,234.3 525.4,233.3Z M539.4,214.4 540.2,213.8 541.4,215.8 540.1,218.7 539.6,216.6Z M536.9,222.6 538.9,222.8 538.6,223.6 537.1,223.5Z M540.2,222.2 544.9,222.3 544.4,223.3 540.6,223.0Z M545.2,218.7 550.1,218.7 550.5,221.5 551.8,222.8 555.1,220.7 556.7,220.0 561.7,221.7 561.7,232.3 558.4,230.5 556.7,231.2 557.5,228.9 556.7,226.4 553.4,224.8 549.3,224.0 548.2,222.0 549.8,221.0 546.8,220.7Z M550.5,226.7 551.3,226.9 551.0,228.6 550.3,227.7Z M502.7,220.2 505.1,219.9 505.0,222.3 503.7,221.5Z M506.6,221.7 507.8,221.8 507.3,222.6Z M489.5,215.1 490.6,216.1 490.0,216.4Z M492.0,219.0 492.9,220.2 492.3,220.2Z"/>
<path fill="#a1cd9a" d="M325.7,159.8 326.5,162.5 327.3,164.4 323.2,166.9 320.2,168.7 315.0,170.3 315.0,172.0 307.5,172.0 309.5,171.2 312.8,169.0 313.3,167.1 314.0,164.1 316.9,162.1 319.1,160.0 319.6,158.7 320.6,158.5 321.9,159.7Z"/>
<path fill="#a1cd9a" d="M307.5,172.0 315.0,172.0 315.0,174.8 309.5,174.8 309.5,179.0 307.9,179.7 307.9,182.5 301.3,182.5 301.1,183.1 302.9,178.5 304.9,175.6Z"/>
<path fill="#a1cd9a" d="M333.7,206.9 333.9,202.6 335.6,200.2 335.2,198.2 335.9,195.3 338.4,194.6 341.7,195.9 345.8,195.6 349.9,195.9 351.7,194.9 352.7,197.1 353.4,198.5 351.1,201.7 349.1,204.6 347.9,206.4 345.8,206.1 343.5,209.5 340.8,210.2 339.2,210.3 337.5,207.9 336.6,207.1Z"/>
<path fill="#a1cd9a" d="M385.3,210.5 388.5,209.9 389.5,210.2 391.9,211.5 394.4,211.8 396.9,211.0 396.9,218.9 397.9,220.2 395.5,222.0 393.9,225.1 391.3,222.3 385.3,219.0 385.3,217.1 387.0,214.9Z"/>
<path fill="#69a761" d="M244.3,210.5 246.9,215.8 246.9,217.4 250.2,218.5 256.0,221.5 260.9,222.2 265.9,223.5 268.3,225.4 271.3,226.4 271.9,229.7 271.3,233.0 268.3,235.4 265.9,238.7 265.0,242.8 265.0,246.1 263.7,249.4 262.1,252.7 260.1,255.1 256.0,255.4 253.0,256.8 249.4,259.2 249.0,262.5 247.7,265.0 245.3,268.2 243.1,270.4 241.3,272.7 241.1,271.0 237.0,266.8 234.4,266.9 237.3,263.8 240.6,262.0 240.8,260.4 239.3,259.4 239.8,256.9 237.8,256.8 237.3,254.0 233.9,253.6 233.4,250.4 234.0,248.6 234.5,246.9 233.1,245.8 233.1,244.1 230.1,244.0 229.6,240.0 227.1,239.0 223.0,237.6 221.7,236.3 221.7,233.5 219.7,233.6 216.4,235.4 214.8,235.4 213.0,235.4 213.0,233.0 210.1,233.8 209.0,232.7 207.7,228.1 209.3,225.6 214.1,224.3 213.9,220.7 214.8,218.2 214.3,214.6 218.9,215.4 221.4,216.1 223.8,213.3 223.3,210.7 226.3,210.8 229.3,208.9 230.1,208.9 230.7,210.0 230.4,213.3 232.4,215.3 235.4,214.1 237.0,214.3 239.5,213.8 242.8,213.5Z"/>
<path fill="#69a761" stroke-width="1.6" d="M337.5,121.5 337.5,116.5 340.8,114.1 346.6,111.6 350.7,108.3 354.0,105.4 359.0,103.3 365.6,102.1 371.8,100.8 376.3,101.0 380.4,102.1 380.1,102.9 377.1,103.4 375.4,102.6 371.8,103.3 370.2,104.7 363.9,103.9 363.1,104.2 362.3,105.2 359.0,105.1 356.5,106.0 354.5,108.8 352.7,110.8 351.9,112.4 349.4,113.3 349.4,116.5 350.4,117.0 348.7,120.3 347.8,120.5 346.6,119.8 343.3,122.0 340.8,122.3Z"/>
<path fill="#69a761" d="M347.8,120.5 348.7,120.3 350.4,117.0 349.4,116.5 349.4,113.3 351.9,112.4 352.7,110.8 354.5,108.8 356.5,106.0 359.0,105.1 362.3,105.2 363.1,104.2 368.0,106.0 368.4,107.8 369.2,109.5 365.6,110.0 364.4,111.6 361.4,113.6 358.1,115.2 357.6,117.9 360.3,119.3 357.3,121.1 356.5,123.9 355.7,125.2 352.9,126.4 350.7,126.5 349.9,124.7 348.3,122.3Z M359.3,123.9 360.6,122.4 360.3,123.6Z"/>
<path fill="#69a761" d="M363.1,104.2 363.9,103.9 370.2,104.7 371.8,103.3 375.4,102.6 377.1,103.4 376.3,105.1 378.7,106.4 377.1,107.7 378.7,109.7 378.2,111.6 379.6,112.8 381.2,114.2 377.9,116.5 375.1,118.2 372.1,118.3 367.2,119.2 364.7,118.0 364.4,116.0 364.2,114.1 366.4,112.8 370.5,110.8 371.0,110.0 369.2,109.5 368.4,107.8 368.0,106.0Z"/>
<path fill="#69a761" d="M342.6,126.4 342.8,123.8 346.6,122.8 346.3,124.7 347.3,125.1 345.8,126.9 345.0,127.4 343.5,127.4Z M347.4,126.7 349.9,125.6 349.7,126.9 348.7,127.5Z"/>
<path fill="#69a761" stroke-width="1.5" d="M326.0,125.9 324.4,125.6 325.7,124.2 326.2,122.9 322.7,122.9 324.0,121.3 321.1,121.3 320.2,123.1 319.1,124.6 320.2,125.9 321.4,127.2 321.2,127.7 323.7,127.4 324.2,127.2Z M317.3,123.4 319.1,121.6 318.9,122.9Z M326.8,118.2 327.7,118.7 327.0,119.2Z M323.9,120.6 324.9,120.5 324.4,121.0Z"/>
<path fill="#69a761" d="M318.9,131.8 319.2,130.0 319.1,128.7 316.9,128.7 316.0,128.0 317.1,127.2 317.3,126.5 315.3,127.0 315.1,128.3 312.8,128.5 313.1,130.0 314.0,131.1 312.2,132.1 313.1,132.9 315.8,132.4Z"/>
<path fill="#69a761" d="M333.4,133.6 334.9,133.1 337.5,133.1 338.7,134.1 339.2,134.1 339.7,134.9 338.9,136.2 337.2,135.4 336.2,135.6 333.9,134.3Z"/>
<path fill="#69a761" d="M314.6,148.5 315.8,148.5 318.9,148.8 317.9,150.2 317.8,152.6 316.9,155.1 317.1,156.4 314.6,156.7 314.8,154.3 313.6,153.8 314.8,151.0Z M282.3,154.1 283.3,153.8 283.2,154.4Z M301.0,163.6 301.8,163.6 301.4,163.9Z"/>
<path fill="#69a761" d="M345.1,139.5 346.6,139.7 350.7,139.5 350.7,138.2 352.0,137.4 354.0,137.0 357.3,137.4 357.5,138.7 356.3,140.3 355.7,140.8 351.9,141.1 349.4,140.6 346.6,140.5Z"/>
<path fill="#69a761" d="M352.7,129.0 356.5,128.0 359.8,127.7 361.6,128.2 366.9,128.3 368.0,129.0 368.7,131.0 368.2,132.9 368.9,134.3 366.7,136.9 360.6,136.4 360.3,136.2 358.1,134.9 355.7,134.4 353.7,133.9 353.5,133.8 353.4,131.1Z"/>
<path fill="#69a761" d="M349.6,134.9 353.5,133.8 355.7,134.4 358.1,134.9 360.3,136.2 357.3,137.4 354.0,137.0 352.0,137.4Z"/>
<path fill="#69a761" d="M351.9,141.1 355.7,140.8 356.7,141.1 355.0,142.8 351.7,142.8 351.9,142.5Z"/>
<path fill="#69a761" d="M362.6,152.3 363.9,150.5 367.2,149.7 369.7,149.5 372.1,149.7 372.8,149.0 372.1,150.5 368.9,150.7 368.7,151.8 366.9,151.1 366.9,152.6 367.7,153.8 368.9,154.8 367.5,155.2 367.5,157.5 366.2,157.5 365.1,157.0 364.2,155.4 364.2,154.6 363.6,153.6Z M368.0,159.2 372.6,159.7 372.1,160.0 368.2,159.7Z M375.1,157.7 375.8,158.0 375.1,158.5Z M372.1,152.9 373.1,153.4 372.3,153.6Z"/>
<path fill="#69a761" d="M372.1,150.5 372.8,149.0 375.4,148.5 377.3,149.8 380.4,150.0 384.5,148.5 387.0,148.4 389.5,149.7 391.9,150.3 395.2,150.2 397.7,149.3 401.0,150.0 401.3,151.6 403.1,152.3 402.5,154.4 403.1,156.4 399.2,156.6 395.2,157.0 391.9,157.0 389.8,157.0 389.0,158.5 388.6,157.4 386.2,157.5 382.9,158.2 379.7,157.0 377.9,158.0 375.4,157.2 374.5,156.1 372.8,154.3 373.5,152.8 372.5,151.6Z"/>
<path fill="#69a761" d="M380.1,102.9 383.7,103.4 388.6,103.9 396.9,106.4 396.9,108.3 392.7,109.0 384.5,108.0 386.7,111.6 390.3,112.6 391.9,111.1 396.0,111.5 401.0,108.8 401.8,105.2 405.1,105.9 405.9,107.8 409.2,106.4 416.6,105.6 419.1,105.6 426.5,104.2 429.0,102.9 434.8,103.7 441.4,105.1 439.7,103.4 439.4,101.3 443.0,97.7 449.3,98.0 448.8,101.0 448.0,105.1 451.3,107.5 450.4,104.2 452.1,99.2 457.0,98.8 462.0,96.7 472.7,96.0 471.0,93.9 477.6,93.3 490.8,91.9 501.2,90.0 505.6,91.4 515.5,92.8 516.3,96.4 510.6,96.0 514.7,96.5 525.4,97.5 533.7,96.5 538.6,98.5 541.9,97.8 542.7,100.6 548.5,100.1 559.2,98.5 560.0,97.7 576.5,99.8 579.8,101.1 593.0,103.1 596.3,103.1 610.3,102.4 611.1,104.2 619.3,102.8 625.9,104.4 625.9,110.6 622.6,111.6 621.8,114.6 616.1,116.0 610.3,119.0 602.9,119.0 598.7,121.5 597.9,122.3 597.1,125.2 595.9,127.2 593.0,130.2 590.2,132.1 587.5,133.8 585.9,131.3 586.4,128.8 585.6,125.6 587.7,122.8 591.3,119.8 597.9,116.5 593.0,116.0 587.2,116.5 584.7,120.1 578.1,120.3 573.2,119.8 565.0,120.1 560.0,123.1 555.9,127.2 552.1,127.7 555.1,129.2 560.8,130.2 562.2,131.8 560.8,135.4 560.0,138.4 556.7,141.6 552.6,145.2 548.5,147.2 545.2,147.5 544.7,148.0 544.5,147.4 545.5,145.2 545.2,143.6 548.5,143.4 551.3,138.2 545.2,139.2 544.4,137.2 539.4,135.7 536.1,130.5 532.8,129.7 527.9,130.2 527.1,131.0 528.2,132.1 525.4,134.9 523.4,136.2 521.6,135.7 518.0,135.1 512.2,136.5 507.3,136.2 504.8,134.9 498.2,134.7 497.4,133.3 491.6,132.1 490.8,134.6 490.0,135.7 480.9,134.3 476.0,136.2 474.0,136.7 472.7,136.7 469.7,136.1 466.9,133.8 461.1,134.1 457.7,130.0 454.5,128.5 450.4,128.8 446.3,128.5 446.3,126.7 443.0,126.7 437.2,127.9 430.7,128.8 429.8,130.5 429.8,134.1 427.4,134.4 420.8,134.4 419.1,133.8 413.3,132.8 409.2,135.4 406.8,136.2 405.9,137.9 408.4,139.2 410.4,141.3 407.6,142.8 406.8,144.4 407.6,146.9 409.2,148.7 405.8,148.7 401.8,147.5 398.5,146.6 395.2,146.2 391.1,144.1 389.9,143.1 391.1,142.0 393.6,140.0 392.3,140.2 394.9,138.8 395.4,136.1 391.9,135.6 388.0,134.7 386.0,132.4 385.0,131.5 381.7,132.0 383.2,129.8 380.4,127.7 380.2,126.2 375.8,125.2 374.5,123.1 374.9,122.4 374.5,121.0 375.4,119.8 379.1,119.2 376.3,118.2 375.1,118.2 377.9,116.5 381.2,114.2 379.6,112.8 378.2,111.6 378.7,109.7 377.1,107.7 378.7,106.4 376.3,105.1 377.1,103.4Z M32.7,105.6 39.3,107.2 48.3,109.0 45.0,111.1 40.1,110.8 35.1,108.8 32.7,109.8Z M361.6,128.2 366.9,128.3 366.9,127.4 363.9,126.7 362.1,127.4Z"/>
<path fill="#69a761" stroke-width="1.7" d="M414.2,99.8 416.6,101.3 424.1,101.6 421.6,97.2 428.2,94.1 442.2,91.4 438.1,91.1 424.9,92.8 419.9,96.0Z M485.9,87.5 494.1,88.2 502.3,88.5 494.1,85.7 485.9,84.6Z M555.1,93.9 563.3,94.7 570.7,94.1 565.0,92.9 556.7,92.9Z M563.3,128.3 565.0,130.5 565.5,135.4 565.8,141.1 563.3,141.8 563.6,137.0 563.0,132.1Z"/>
<path fill="#69a761" d="M385.8,166.1 387.1,163.1 388.5,162.8 388.1,163.8 387.8,165.7 387.0,169.0Z"/>
<path fill="#69a761" d="M386.8,169.2 388.8,169.5 391.9,167.4 390.3,165.7 393.9,164.6 395.9,165.1 398.5,166.4 403.0,169.5 405.9,169.7 407.6,170.3 409.1,170.7 411.7,173.6 412.0,175.4 413.0,176.7 414.3,177.7 416.0,179.8 420.3,180.2 421.1,181.3 419.9,184.6 415.0,186.2 410.1,186.9 406.8,189.7 402.6,188.9 400.5,188.9 399.8,190.5 396.0,185.1 393.9,182.5 392.7,178.9 390.6,176.4 388.6,173.9 387.3,171.5Z"/>
<path fill="#69a761" d="M403.1,152.3 405.9,153.6 408.4,152.5 409.9,154.4 411.7,156.1 415.0,157.4 418.1,156.2 421.6,155.1 424.9,155.6 427.4,156.4 430.2,157.4 430.2,159.0 429.0,162.1 429.5,165.7 431.1,165.9 429.7,168.5 432.8,171.2 433.6,173.4 430.8,176.1 426.5,175.7 423.7,175.1 423.2,173.1 421.9,172.8 419.4,173.9 415.8,172.3 413.0,169.8 411.7,167.9 409.9,167.5 409.2,168.4 407.9,166.7 405.4,163.3 404.3,161.6 405.1,158.7 403.1,156.4 402.5,154.4Z"/>
<path fill="#69a761" d="M430.8,176.1 433.6,173.4 432.8,171.2 429.7,168.5 432.3,169.2 434.8,169.2 438.6,168.4 439.2,166.2 443.5,165.1 444.5,163.1 444.7,161.6 446.6,160.5 447.3,157.9 451.3,157.0 452.2,156.4 453.7,157.0 457.5,159.2 455.9,160.7 451.7,160.5 451.3,163.0 453.4,164.4 452.2,166.4 451.1,168.2 449.4,169.8 447.8,171.6 445.3,171.5 444.0,172.8 445.0,175.3 446.3,177.4 442.7,177.5 441.7,178.5 440.4,176.7 438.9,175.7 435.6,176.1Z"/>
<path fill="#69a761" d="M441.7,178.5 442.7,177.5 446.3,177.4 445.0,175.3 444.0,172.8 445.3,171.5 447.8,171.6 449.4,169.8 451.1,168.2 452.2,166.4 453.4,164.4 451.3,163.0 451.7,160.5 455.9,160.7 457.5,159.2 459.0,161.5 458.7,164.1 459.3,166.2 462.8,167.9 461.3,170.2 464.1,171.6 466.6,172.5 470.2,173.8 474.5,174.1 474.5,171.6 475.6,171.5 475.8,172.6 477.3,173.6 480.9,173.3 480.3,171.8 481.7,171.6 485.0,169.5 487.8,169.2 489.7,171.2 489.2,173.0 486.2,174.8 485.2,176.1 485.4,178.0 483.1,178.0 483.2,180.3 481.9,181.5 481.4,178.5 479.6,178.5 480.3,177.5 481.6,176.4 477.3,175.9 477.3,174.8 475.0,174.1 474.5,175.1 474.5,177.2 475.6,177.5 475.5,179.4 476.1,181.2 476.0,182.0 473.0,182.1 472.5,184.1 469.7,185.4 464.9,190.2 461.5,192.0 461.6,195.4 460.8,198.2 461.0,200.5 459.8,202.1 458.2,202.8 457.0,204.1 455.4,202.3 453.2,197.7 452.1,193.6 450.4,190.3 449.3,186.2 449.1,183.0 447.1,183.3 445.5,183.3 443.0,180.8 445.0,179.7Z M482.1,195.3 482.6,195.6 482.2,198.2 481.7,198.0Z"/>
<path fill="#69a761" d="M494.3,206.7 495.9,208.1 497.6,207.2 499.7,210.0 499.9,213.0 501.0,215.1 499.7,215.1 496.2,212.6 494.9,210.0 494.6,208.4Z M509.9,214.1 512.7,212.8 513.1,213.3 515.5,212.2 517.2,210.0 519.6,208.4 521.6,205.9 523.3,206.9 525.7,208.7 523.8,210.3 522.9,210.5 520.1,210.3 518.8,212.8 518.5,214.9 514.2,215.1 511.4,215.9Z"/>
<path fill="#69a761" d="M528.7,176.1 530.2,176.4 528.5,181.3 527.2,179.7Z"/>
<path fill="#69a761" stroke-width="1.6" d="M545.2,161.5 547.7,159.3 552.6,159.0 554.7,156.4 557.5,156.2 559.7,152.6 560.0,150.8 562.0,149.5 562.7,151.0 563.3,152.6 561.7,154.8 561.7,157.0 561.3,158.9 559.7,160.0 558.0,160.5 555.1,160.5 554.7,161.1 553.1,162.5 551.8,160.7 548.5,161.1Z M560.0,149.2 560.5,146.4 562.8,142.9 565.8,144.9 568.8,144.7 569.2,146.4 565.8,148.5 562.5,147.7 560.8,148.4Z M543.2,162.8 545.2,161.8 546.7,163.3 545.7,165.9 544.0,166.2 543.0,163.8Z M547.7,162.1 550.6,161.1 551.1,162.0 548.5,163.6Z"/>
<path fill="#69a761" d="M538.1,155.4 540.9,154.1 542.6,156.7 542.6,159.2 541.1,160.2 537.8,161.0 537.6,158.4 537.9,156.7Z M537.3,162.6 538.4,162.5 537.8,163.0Z"/>
<path fill="#69a761" d="M370.5,165.6 370.5,181.3 390.1,181.3 388.1,178.2 386.2,174.8 384.5,171.8 382.9,168.5 385.7,172.0 386.8,169.0 385.8,166.1 382.9,166.4 380.4,165.7 377.1,166.7 373.8,165.9Z"/>
<path fill="#69a761" d="M356.5,264.3 358.1,264.6 362.3,264.0 362.3,258.1 363.6,261.4 366.7,259.2 371.3,259.5 373.6,257.3 377.8,253.8 380.9,254.1 382.0,257.6 382.0,261.4 383.5,261.5 382.7,264.3 380.4,266.6 378.7,268.7 375.9,271.2 373.0,272.8 371.5,273.3 366.4,273.3 362.3,274.5 359.6,273.5 359.5,271.0 357.8,267.4Z"/>
<path fill="#69a761" stroke-width="1.6" d="M613.9,273.8 616.5,275.1 618.5,277.6 619.3,279.1 623.5,279.2 622.3,281.7 621.0,282.2 620.2,284.3 618.2,285.6 617.4,285.0 617.7,283.3 615.7,282.0 617.0,280.9 617.4,278.6 616.4,277.1Z M613.9,283.8 616.5,285.5 614.4,288.2 611.6,290.1 610.8,292.7 608.6,293.8 606.7,293.8 603.7,292.8 605.3,290.7 608.6,289.1 611.6,286.3Z M605.5,294.2 606.5,294.3 605.8,294.8Z"/>
<path fill="#4f8843" d="M333.4,133.6 333.9,134.3 336.2,135.6 337.2,135.4 338.9,136.2 339.8,136.2 342.8,137.0 341.8,139.3 339.2,141.5 340.8,142.1 340.5,144.4 341.8,145.6 340.0,146.7 336.7,146.2 334.4,146.6 334.6,147.9 330.5,147.4 326.3,146.2 327.3,144.3 327.3,141.6 325.2,139.8 321.6,138.7 321.9,137.5 326.7,137.5 326.3,135.9 329.6,136.2 331.9,134.9Z M343.5,147.0 345.0,146.9 345.0,149.3 343.8,149.3Z"/>
<path fill="#4f8843" d="M314.6,146.6 316.9,145.6 321.9,146.1 326.3,146.2 330.5,147.4 334.6,147.9 334.6,148.7 330.9,150.2 329.3,151.8 328.8,153.1 329.6,153.9 328.1,155.6 326.0,157.0 321.9,157.2 320.1,158.4 318.8,157.0 317.1,156.4 316.9,155.1 317.8,152.6 317.9,150.2 318.9,148.8 315.8,148.5 314.6,148.5Z M333.3,152.5 334.9,152.1 334.4,152.9Z M301.6,170.8 302.6,170.7 301.9,171.5Z M303.3,171.3 303.9,171.3 303.6,171.8Z M305.9,170.5 306.6,170.3 305.9,171.3Z"/>
<path fill="#3f6d32" d="M96.9,103.3 105.2,104.9 110.1,104.4 118.4,103.6 123.3,104.7 129.9,104.4 139.8,105.9 141.4,106.9 149.7,107.5 151.3,106.5 161.2,107.5 167.8,106.5 171.1,106.7 171.9,103.4 173.6,99.5 177.7,102.6 181.0,104.6 184.3,105.1 187.6,103.4 189.2,102.9 194.2,103.7 195.0,106.7 192.5,108.7 187.6,108.7 185.9,110.3 183.5,112.4 179.3,112.8 176.0,114.9 173.6,118.2 173.2,121.0 176.9,123.9 182.6,124.2 189.2,126.7 193.7,127.0 193.8,130.5 196.6,133.3 199.1,132.9 199.4,130.5 198.3,128.0 202.4,125.6 203.2,123.1 199.9,121.1 201.3,118.2 200.8,115.1 207.3,115.2 213.1,117.4 214.8,120.6 218.1,121.8 221.4,119.3 223.0,118.5 226.3,122.0 228.8,125.6 233.7,127.5 237.0,130.5 237.5,132.1 235.4,133.1 230.4,135.1 223.8,134.9 219.2,135.4 216.4,137.0 222.2,136.7 223.3,137.9 220.5,138.7 222.2,140.3 223.8,142.0 227.9,142.8 230.4,141.1 229.6,142.6 224.7,144.3 220.5,146.1 220.2,144.6 223.0,142.9 218.9,143.4 217.6,142.3 217.6,140.2 215.3,139.7 213.1,142.8 211.5,143.6 206.0,143.6 203.2,145.1 199.1,146.2 199.1,147.0 193.3,148.5 192.5,148.0 193.5,146.9 193.3,143.1 191.5,141.8 190.0,141.1 183.6,138.2 181.6,138.7 177.7,138.2 172.4,137.0 126.3,137.0 123.6,134.9 119.2,132.9 117.5,130.5 114.7,127.7 114.7,126.9 110.1,123.9 103.5,120.6 96.9,118.5Z"/>
<path fill="#3f6d32" stroke-width="1.9" d="M126.1,138.0 122.5,137.4 117.9,134.3 120.0,134.1 123.3,135.4 125.8,137.4Z M110.1,128.8 112.3,128.8 113.1,131.5 111.3,130.8Z M231.6,139.2 237.0,140.5 242.0,141.0 242.5,139.3 241.1,137.9 237.8,135.9 237.8,132.9 234.9,134.3 232.9,137.9Z M223.0,135.6 227.5,136.7 225.5,136.9Z M123.3,96.4 130.1,95.1 136.6,96.4 135.3,99.6 127.3,101.0 122.6,99.0Z M134.0,99.6 140.6,97.7 152.6,98.3 160.7,101.0 162.0,103.7 154.0,105.1 148.7,103.7 141.9,105.1 135.3,102.3Z M127.3,92.1 136.6,90.8 138.6,92.3 130.1,93.7Z M141.9,92.3 153.3,92.9 154.0,95.1 143.4,95.1Z M155.3,87.7 166.0,88.3 166.6,89.6 156.6,89.5Z M160.7,92.3 168.6,92.3 168.6,94.4 162.0,94.7Z M184.6,84.4 196.6,81.9 210.0,81.0 227.3,81.9 215.3,84.6 207.3,84.4 203.4,86.7 196.6,87.7 194.0,90.0 188.7,88.0Z M172.7,85.9 182.0,84.6 183.9,88.3 175.4,89.2Z M178.0,92.3 196.6,92.1 198.6,95.1 180.7,95.7Z M169.9,90.0 178.0,89.5 178.7,91.6 170.6,91.6Z M180.7,89.6 191.4,90.0 191.4,91.4 181.3,91.4Z M169.9,97.0 176.7,96.4 178.0,101.6 171.3,102.3Z M180.7,97.7 195.3,97.0 197.3,100.3 191.4,103.3 182.0,101.6Z M197.3,98.0 207.3,98.7 218.1,103.7 227.9,108.3 224.7,112.6 218.1,113.6 210.0,110.8 203.4,112.1 200.6,108.3 207.3,107.0 204.7,102.3 197.3,101.0Z M188.7,110.8 195.3,111.5 194.0,114.4 187.4,113.6Z"/>
<path fill="#3f6d32" d="M319.9,135.2 323.5,134.9 326.8,134.3 331.4,133.4 330.9,132.4 332.1,131.0 329.8,130.5 329.3,129.5 329.0,128.3 326.8,127.2 326.0,125.9 324.2,127.2 323.7,127.4 323.9,128.8 324.5,129.8 324.4,130.5 324.4,132.1 324.9,132.8 324.0,133.4 321.9,133.8Z"/>
<path fill="#3f6d32" d="M334.9,133.1 336.2,131.8 337.2,130.5 339.2,129.7 341.2,130.0 340.8,131.6 339.2,132.4 339.2,134.1 338.7,134.1 337.5,133.1Z"/>
<path fill="#3f6d32" d="M339.2,141.5 341.8,139.3 345.1,139.5 346.6,140.5 346.1,141.5 344.1,142.1 340.8,142.1Z"/>
<path fill="#3f6d32" d="M340.8,142.1 344.1,142.1 346.1,141.5 346.6,140.5 349.4,140.6 351.9,141.1 351.9,142.5 349.6,143.1 349.7,144.9 351.7,146.1 352.7,147.9 355.7,148.7 355.7,149.5 359.8,151.5 359.6,152.1 357.3,151.0 356.5,152.3 357.5,153.4 356.5,154.6 355.2,155.2 355.5,153.8 355.0,151.8 353.2,150.8 350.7,149.8 348.6,148.2 346.6,147.0 346.1,145.4 343.8,144.6 341.8,145.6 340.5,144.4Z M349.7,155.1 355.0,154.8 354.2,157.2 350.1,155.7Z M342.8,150.2 345.3,150.0 345.1,153.1 343.1,153.4Z"/>
<path fill="#3f6d32" d="M517.2,253.2 516.3,257.6 516.0,260.0 518.0,264.1 518.8,267.4 520.0,269.9 518.8,273.5 520.5,274.8 523.8,274.8 527.1,273.2 532.8,273.0 536.9,270.4 541.9,269.2 546.0,269.1 550.1,271.2 552.9,274.6 556.1,271.5 556.6,274.0 554.9,275.3 557.5,274.0 556.9,275.9 559.2,276.4 560.0,278.9 562.5,280.4 565.8,281.0 568.3,280.0 570.6,281.5 573.2,279.6 576.5,278.6 576.8,275.9 578.6,272.5 580.6,269.9 581.4,267.4 582.4,263.6 581.8,258.4 578.1,255.9 575.7,253.5 574.0,250.2 570.4,248.6 569.6,245.0 568.8,242.0 566.6,240.7 565.8,238.4 564.1,234.9 562.7,237.9 562.8,242.0 561.3,246.1 559.2,246.1 556.7,244.6 553.1,242.0 553.4,239.5 554.7,237.4 551.8,237.4 547.8,236.1 546.0,237.4 543.9,238.7 542.7,241.8 540.6,241.7 538.6,240.0 536.1,241.2 533.7,244.1 530.9,245.6 530.7,247.2 528.7,249.4 525.4,250.2 521.8,251.2Z M567.8,284.1 570.7,284.8 573.7,284.5 573.5,286.6 572.4,288.2 569.9,288.9 568.6,286.6Z M554.4,275.9 556.6,275.9 555.9,276.4Z M544.0,236.1 545.8,236.1 544.9,236.8Z"/>
<path fill="#36602a" d="M341.2,130.0 343.3,129.5 343.5,127.4 345.0,127.4 345.8,128.2 347.4,128.8 349.9,128.2 352.7,129.0 353.4,131.1 353.5,133.8 349.6,134.9 352.0,137.4 350.7,138.2 350.7,139.5 346.6,139.7 345.1,139.5 341.8,139.3 342.8,137.0 339.8,136.2 339.7,134.9 339.2,134.1 339.2,132.4 340.8,131.6Z"/>
<path fill="#2f5422" stroke-width="1.6" d="M96.9,103.3 96.9,118.5 103.5,120.6 110.1,123.9 114.7,126.9 112.6,127.2 108.5,123.6 104.3,122.0 99.4,119.7 92.0,119.0 87.9,117.4 84.6,119.0 79.6,120.3 81.3,117.0 78.8,117.4 76.3,119.8 74.7,121.8 69.7,124.2 65.6,126.1 60.7,127.5 57.7,128.0 62.3,125.7 68.1,123.1 70.2,121.1 67.3,121.3 62.3,121.1 62.3,119.0 58.2,118.2 55.7,116.0 57.4,114.1 64.0,113.1 64.0,111.6 57.4,111.6 52.4,109.8 59.0,108.2 62.3,108.8 59.9,107.2 54.9,105.4 60.7,103.4 68.9,101.3 71.4,100.5 78.8,101.3 87.0,102.3Z M51.6,129.8 54.9,128.8 54.4,129.7Z M74.7,123.1 78.3,122.3 78.0,123.6 75.5,124.2Z"/>
<path fill="#2f5422" d="M126.3,137.0 123.8,138.0 124.9,141.5 124.1,146.9 124.5,151.3 127.4,155.4 129.9,159.2 130.7,160.8 134.0,161.6 136.3,164.1 140.3,163.8 146.4,166.1 151.0,166.1 151.0,165.2 153.8,165.2 157.1,168.9 159.2,169.8 160.4,168.5 162.2,168.5 165.3,172.3 166.1,174.1 169.1,174.9 168.9,171.8 172.7,169.5 174.7,168.7 178.5,169.2 181.0,169.5 182.6,169.5 181.8,167.9 184.3,167.7 187.6,167.5 189.2,168.7 190.9,168.2 192.8,169.8 193.0,172.0 194.5,174.3 195.5,176.1 197.0,175.9 197.3,173.4 196.5,170.7 195.2,167.4 195.8,164.9 198.3,163.3 200.8,161.8 203.2,160.5 204.9,159.5 204.1,156.7 204.4,155.1 206.5,152.9 207.3,151.0 210.6,150.2 213.9,149.0 212.6,147.7 213.1,146.1 216.4,144.6 218.9,143.8 217.6,142.3 217.6,140.2 215.3,139.7 213.1,142.8 211.5,143.6 206.0,143.6 203.2,145.1 199.1,146.2 199.1,147.0 193.3,148.5 192.5,148.0 193.5,146.9 193.3,143.1 191.5,141.8 190.0,141.1 183.6,138.2 181.6,138.7 177.7,138.2 172.4,137.0Z M72.0,184.9 73.0,184.3 74.2,185.4 72.7,186.4Z M71.1,183.1 72.2,183.3 71.6,183.6Z M68.4,182.1 69.4,182.0 69.2,182.5Z M65.9,181.2 66.8,181.0 66.6,181.5Z"/>
<path fill="#2f5422" d="M450.9,152.6 454.5,151.1 458.7,150.2 461.5,148.2 461.6,146.9 461.8,144.1 461.0,143.8 465.3,143.3 466.1,140.0 470.2,140.2 470.5,138.0 472.7,136.7 474.0,136.7 475.3,138.4 478.6,139.5 479.3,143.3 486.7,144.9 489.2,147.2 495.7,147.5 502.3,149.2 508.9,147.7 513.1,145.7 513.7,143.4 517.2,143.6 522.8,141.1 526.7,140.8 524.6,138.8 519.8,138.8 520.5,137.4 523.4,136.2 525.4,134.9 528.2,132.1 527.1,131.0 527.9,130.2 532.8,129.7 536.1,130.5 539.4,135.7 544.4,137.2 545.2,139.2 551.3,138.2 548.5,143.4 545.2,143.6 545.5,145.2 544.5,147.4 543.4,146.9 540.6,148.7 538.4,148.8 534.3,152.0 529.7,153.6 530.4,151.0 528.7,150.5 526.2,152.1 523.4,153.4 525.2,155.9 528.4,155.4 531.2,156.4 527.9,158.4 525.9,160.0 527.6,162.0 530.0,165.4 530.2,166.9 527.9,167.7 530.4,168.5 529.5,171.2 527.1,173.8 525.4,176.1 522.6,178.7 517.7,180.7 516.3,181.0 513.4,182.0 511.1,184.1 511.2,182.6 510.1,182.1 507.3,182.1 505.1,180.0 502.8,179.2 499.9,180.2 497.7,180.7 497.1,182.6 495.9,182.0 493.1,181.0 492.3,179.4 490.1,177.5 492.0,175.1 492.0,172.1 489.7,171.2 487.8,169.2 485.0,169.5 481.7,171.6 480.3,171.8 476.8,171.3 475.8,172.6 475.6,171.5 474.5,171.6 470.7,171.2 467.7,170.0 464.6,167.7 462.8,167.9 459.3,166.2 458.7,164.1 459.0,161.5 457.5,159.2 453.7,157.0 452.2,156.4 452.9,156.1Z M508.4,185.9 510.1,184.4 512.2,185.1 511.1,187.2 508.9,187.2Z"/>
</g>
<g transform="translate(-228,0)">
<rect x="253" y="70.5" width="17" height="51.5" rx="8.5" fill="#204c14"/>
<rect x="244.5" y="88" width="34.5" height="17" rx="8.5" fill="#204c14"/>
<path d="M261.5,74.8 L266.3,83 L256.7,83Z M261.5,118.2 L266.3,110 L256.7,110Z M248.2,96.5 L256.2,91.8 L256.2,101.2Z M274.8,96.5 L266.8,91.8 L266.8,101.2Z" fill="#fff"/>
<rect x="253" y="126.5" width="17" height="50.5" rx="8.5" fill="#204c14"/>
<path d="M256.7,135.5 H266.3 M261.5,130.7 V140.3 M257,167.5 H266" stroke="#fff" stroke-width="2.2" fill="none"/>
<circle cx="261.5" cy="151.3" r="7.2" fill="#c9ccec"/>
<g fill="none" stroke="#5257b8" stroke-width="0.7">
<circle cx="261.5" cy="151.3" r="7"/>
<ellipse cx="261.5" cy="151.3" rx="3.4" ry="7"/>
<path d="M261.5,144.3 V158.3 M254.5,151.3 H268.5 M255.5,147.8 H267.5 M255.5,154.8 H267.5"/>
</g>
</g>

</svg>
  <div class="abs" style="left:9px;top:374px;width:142px;height:19px;background:linear-gradient(90deg,#ffffff 0%,#f3f7f0 8%,#b3cfab 38%,#7dab70 58%,#3c7c2c 82%,#1e4d10 100%)"></div>
  <div class="abs" style="left:9px;top:375px;font-size:11px;color:#222">0</div>
  <div class="abs" style="left:94px;top:375px;font-size:11px;color:#112">82,042</div>
  <div class="line" style="top:402px"></div>
  <div class="h" style="left:19px;top:411.5px">Report View by Selection</div>
  <div class="h" style="left:586px;top:411.5px;color:#1f4e79">Customize</div>
  <div class="abs" style="left:0;top:436px;width:667px;height:38px;background:#f3f3f3;border-top:1px solid #e0e0e0"></div>
  <div class="th" style="left:13px;top:440px">Total:<br><span style="padding-left:5px">10</span></div>
  <div class="th" style="left:76px;top:447px">Research Fields</div>
  <div class="th" style="left:204px;top:440px">Web of Science<br><span style="padding-left:7.5px">Documents</span></div>
  <div class="th" style="left:337px;top:447px;color:#4a79a8;font-weight:normal">Cites</div>
  <div class="abs" style="left:372px;top:453px;width:0;height:0;border-left:4px solid transparent;border-right:4px solid transparent;border-top:4px solid #6f9bd0"></div>
  <div class="th" style="left:430px;top:447px">Cites/Paper</div>
  <div class="th" style="left:558px;top:447px">Top Papers</div>
<div class="row" style="top:473px;height:21px"></div>
<div class="num" style="top:475px">1</div>
<div class="c1" style="top:477.0px">CHEMISTRY</div>
<div class="c2" style="top:475px">1,676</div>
<div class="c3" style="top:475px">40,770</div>
<div class="c4" style="top:475px">24.33</div>
<div class="bar" style="top:475px"><i style="width:93px"></i><b class="w">36</b></div>
<div class="row" style="top:494px;height:32px"></div>
<div class="num" style="top:502.0px">2</div>
<div class="c1" style="top:498.0px">MATERIALS<br>SCIENCE</div>
<div class="c2" style="top:502.0px">920</div>
<div class="c3" style="top:502.0px">21,360</div>
<div class="c4" style="top:502.0px">23.22</div>
<div class="bar" style="top:502.0px"><i style="width:32px"></i><b>12</b></div>
<div class="row" style="top:526px;height:24px"></div>
<div class="num" style="top:530.0px">3</div>
<div class="c1" style="top:532.0px">ENGINEERING</div>
<div class="c2" style="top:530.0px">923</div>
<div class="c3" style="top:530.0px">15,809</div>
<div class="c4" style="top:530.0px">17.13</div>
<div class="bar" style="top:530.0px"><i style="width:26px"></i><b>10</b></div>
<div class="row" style="top:550px;height:24px"></div>
<div class="num" style="top:554.0px">4</div>
<div class="c1" style="top:556.0px">MATHEMATICS</div>
<div class="c2" style="top:554.0px">927</div>
<div class="c3" style="top:554.0px">6,981</div>
<div class="c4" style="top:554.0px">7.53</div>
<div class="bar" style="top:554.0px"><i style="width:34px"></i><b>13</b></div>
<div class="row" style="top:574px;height:32px"></div>
<div class="num" style="top:582.0px">5</div>
<div class="c1" style="top:578.0px">COMPUTER<br>SCIENCE</div>
<div class="c2" style="top:582.0px">250</div>
<div class="c3" style="top:582.0px">6,187</div>
<div class="c4" style="top:582.0px">24.75</div>
<div class="bar" style="top:582.0px"><i style="width:18px"></i><b>7</b></div>
<div class="row" style="top:606px;height:32px"></div>
<div class="num" style="top:614.0px">6</div>
<div class="c1" style="top:610.0px">ENVIRONMENT/E<br>COLOGY</div>
<div class="c2" style="top:614.0px">335</div>
<div class="c3" style="top:614.0px">5,267</div>
<div class="c4" style="top:614.0px">15.72</div>
<div class="bar" style="top:614.0px"><i style="width:5px"></i><b>2</b></div>
<div class="row" style="top:638px;height:43px"></div>
<div class="num" style="top:651.5px">7</div>
<div class="c1" style="top:641.5px">SOCIAL<br>SCIENCES,<br>GENERAL</div>
<div class="c2" style="top:651.5px">221</div>
<div class="c3" style="top:651.5px">4,775</div>
<div class="c4" style="top:651.5px">21.61</div>
<div class="bar" style="top:651.5px"><i style="width:29px"></i><b>11</b></div>
<div class="row" style="top:681px;height:32px"></div>
<div class="num" style="top:689.0px">8</div>
<div class="c1" style="top:685.0px">PLANT &amp; ANIMAL<br>SCIENCE</div>
<div class="c2" style="top:689.0px">221</div>
<div class="c3" style="top:689.0px">4,257</div>
<div class="c4" style="top:689.0px">19.26</div>
<div class="bar" style="top:689.0px"><i style="width:21px"></i><b>8</b></div>
<div class="row" style="top:713px;height:32px"></div>
<div class="num" style="top:721.0px">9</div>
<div class="c1" style="top:717.0px">AGRICULTURAL<br>SCIENCES</div>
<div class="c2" style="top:721.0px">187</div>
<div class="c3" style="top:721.0px">4,186</div>
<div class="c4" style="top:721.0px">22.39</div>
<div class="bar" style="top:721.0px"><i style="width:16px"></i><b>6</b></div>
<div class="row" style="top:745px;height:24px"></div>
<div class="num" style="top:749.0px">0</div>
<div class="c1" style="top:751.0px">ALL FIELDS</div>
<div class="c2" style="top:749.0px">7,777</div>
<div class="c3" style="top:749.0px">143,171</div>
<div class="c4" style="top:749.0px">18.41</div>
<div class="bar" style="top:749.0px"><i style="width:93px"></i><b class="w">127</b></div>
</div>
</body>
</html>
